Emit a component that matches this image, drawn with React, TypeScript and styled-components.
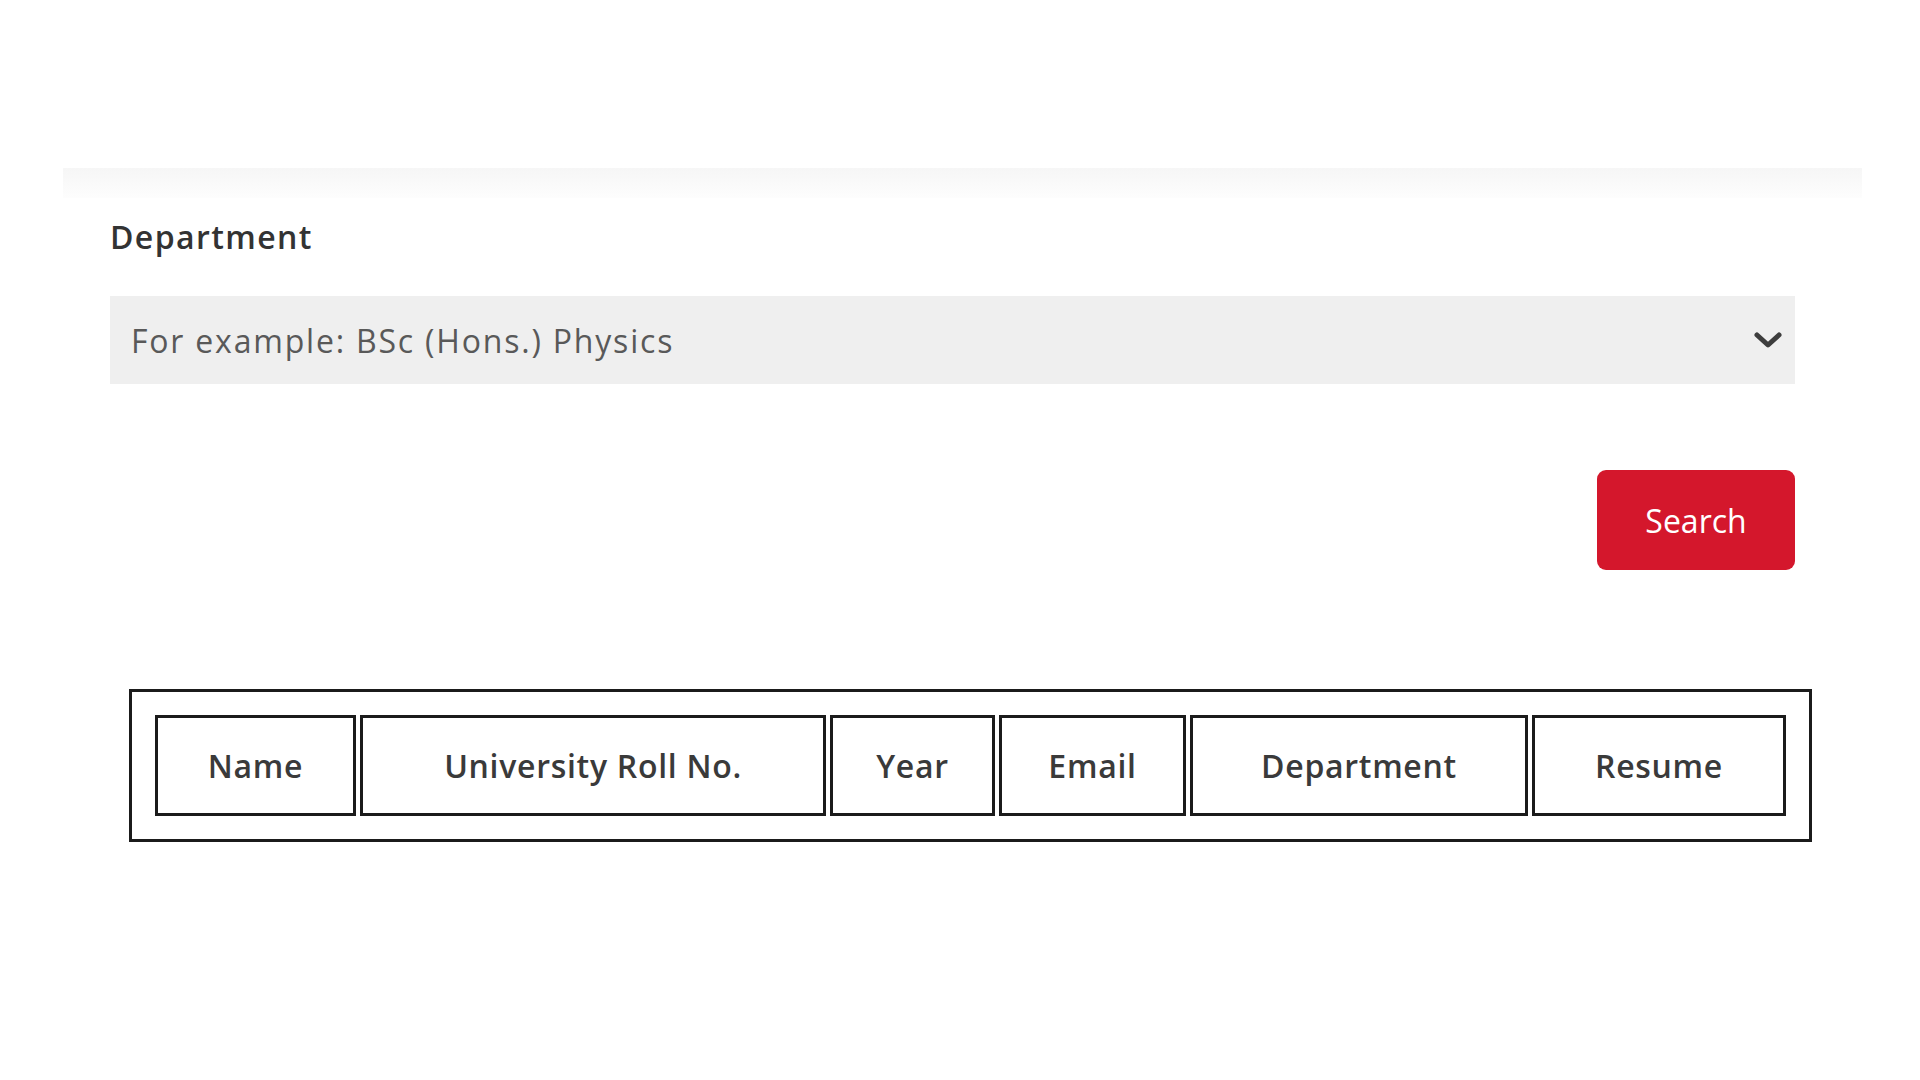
import React from "react";
import styled, { createGlobalStyle } from "styled-components";

const Global = createGlobalStyle`
  *, *::before, *::after { box-sizing: border-box; }
  html, body { margin: 0; padding: 0; background: #ffffff; }
  body { font-family: "Open Sans", "Liberation Sans", sans-serif; color: #333; }
`;

const Page = styled.div`
  width: 1920px;
  min-height: 1080px;
  padding-top: 168px;
  background: #fff;
`;

const Band = styled.div`
  margin: 0 58px 0 63px;
  height: 30px;
  background: linear-gradient(to bottom, #f6f6f6, #fdfdfd);
`;

const Form = styled.div`
  padding: 0 125px 0 110px;
  display: flex;
  flex-direction: column;
`;

const Label = styled.label`
  margin-top: 19px;
  font-size: 32px;
  font-weight: 600;
  line-height: 40px;
  color: #333;
  letter-spacing: 1.4px;
`;

const SelectBox = styled.div`
  margin-top: 39px;
  height: 88px;
  background: #efefef;
  display: flex;
  align-items: center;
  justify-content: space-between;
  padding: 0 12px 0 21px;
`;

const Placeholder = styled.span`
  font-size: 32px;
  color: #595959;
  letter-spacing: 1.8px;
`;

const Chevron = styled.svg`
  width: 30px;
  height: 18px;
`;

const ButtonRow = styled.div`
  display: flex;
  justify-content: flex-end;
  margin-top: 86px;
`;

const SearchButton = styled.button`
  width: 198px;
  height: 100px;
  border: none;
  border-radius: 9px;
  background: #d4172c;
  color: #fff;
  font-family: "Open Sans", "Liberation Sans", sans-serif;
  font-size: 32px;
  font-weight: 500;
  cursor: pointer;
`;

const Table = styled.table`
  margin: 119px 0 0 129px;
  width: 1683px;
  table-layout: fixed;
  border: 3px solid #1b1b1b;
  border-collapse: separate;
  border-spacing: 4px;
  padding: 19px;
`;

const Th = styled.th<{ $w: number }>`
  width: ${(p) => p.$w}px;
  height: 101px;
  border: 3px solid #1b1b1b;
  font-size: 32px;
  font-weight: 600;
  color: #3a3a3a;
  letter-spacing: 0.7px;
  text-align: center;
  vertical-align: middle;
  padding: 0;
`;

const columns: [string, number][] = [
  ["Name", 201],
  ["University Roll No.", 466],
  ["Year", 165],
  ["Email", 187],
  ["Department", 338],
  ["Resume", 254],
];

export default function App() {
  return (
    <Page>
      <Global />
      <Band />
      <Form>
        <Label>Department</Label>
        <SelectBox>
          <Placeholder>For example: BSc (Hons.) Physics</Placeholder>
          <Chevron viewBox="0 0 30 18">
            <polyline
              points="4,4 15,14 26,4"
              fill="none"
              stroke="#3d3d3d"
              strokeWidth="5"
              strokeLinecap="round"
              strokeLinejoin="round"
            />
          </Chevron>
        </SelectBox>
        <ButtonRow>
          <SearchButton>Search</SearchButton>
        </ButtonRow>
      </Form>
      <Table>
        <thead>
          <tr>
            {columns.map(([t, w]) => (
              <Th key={t} $w={w}>
                {t}
              </Th>
            ))}
          </tr>
        </thead>
      </Table>
    </Page>
  );
}
